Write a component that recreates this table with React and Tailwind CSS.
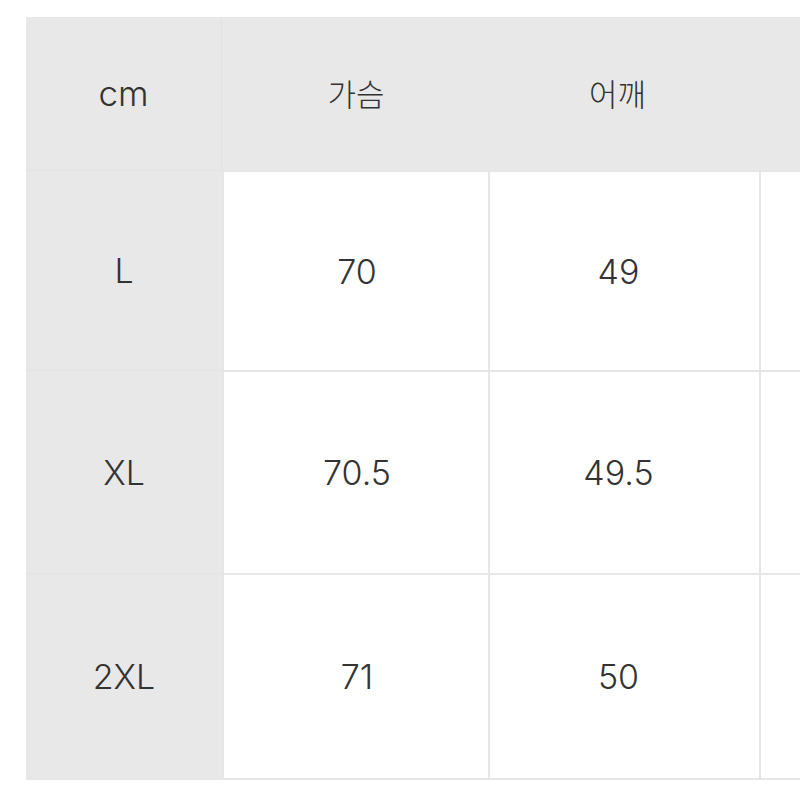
import React from "react";

const head = ["가슴", "어깨", ""];
const rows = [
  { size: "L", values: ["70", "49", ""] },
  { size: "XL", values: ["70.5", "49.5", ""] },
  { size: "2XL", values: ["71", "50", ""] },
];

const rowHeights = ["h-[200px]", "h-[203px]", "h-[205px]"];
const colWidths = ["w-[266px] pl-[2px]", "w-[271px] pr-[12px]", "w-[266px]"];

export default function App() {
  return (
    <div className="w-[800px] h-[800px] overflow-hidden bg-white pl-[26px] pt-[17px] font-['Inter','Noto_Sans_CJK_KR',sans-serif] font-light text-[#333]">
      <div className="w-max border-b-2 border-[#e6e6e6]">
        {/* header */}
        <div className="flex h-[153px] bg-[#e8e8e8]">
          <div className="w-[196px] flex items-center justify-center text-[35px] border-r border-[#e2e2e2]">
            cm
          </div>
          {head.map((h, i) => (
            <div
              key={i}
              className={`${colWidths[i]} flex items-center justify-center text-[31px] font-['Noto_Sans_CJK_KR',sans-serif]`}
            >
              {h}
            </div>
          ))}
        </div>

        {rows.map((r, ri) => (
          <div key={r.size} className={`flex ${rowHeights[ri]}`}>
            <div className="w-[196px] flex items-center justify-center bg-[#e8e8e8] text-[34px] border-t border-[#e3e3e3]">
              {r.size}
            </div>
            {r.values.map((v, i) => (
              <div
                key={i}
                className={`${colWidths[i]} flex items-center justify-center text-[34px] border-t-2 border-l-2 border-[#e6e6e6]`}
              >
                {v}
              </div>
            ))}
          </div>
        ))}
      </div>
    </div>
  );
}
